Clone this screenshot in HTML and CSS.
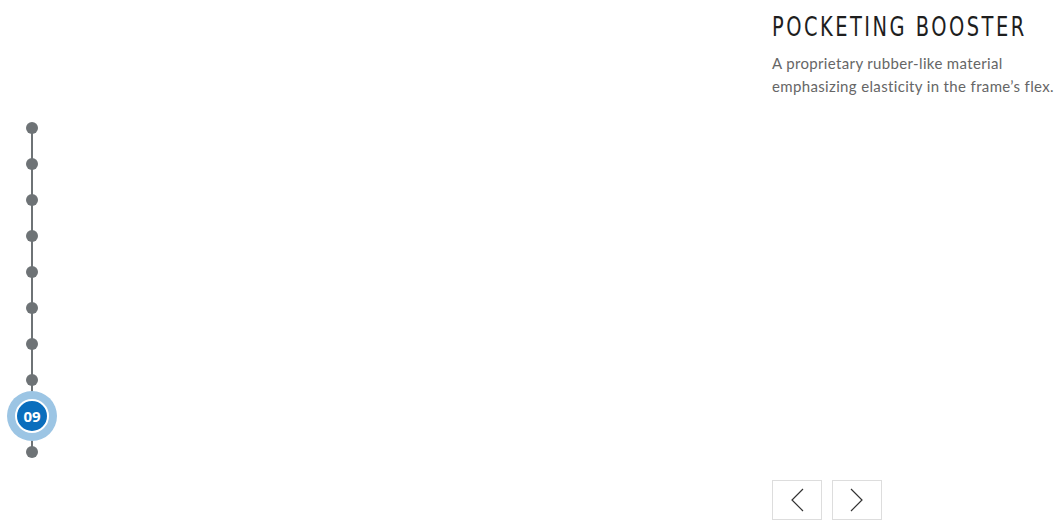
FILE: index.html
```html
<!DOCTYPE html>
<html lang="en">
<head>
<meta charset="UTF-8">
<meta name="viewport" content="width=device-width, initial-scale=1.0">
<title>Pocketing Booster</title>
<link rel="stylesheet" href="styles.css">
</head>
<body>
  <div class="page">
    <div class="timeline">
      <div class="step"><span class="dot"></span></div>
      <div class="step"><span class="dot"></span></div>
      <div class="step"><span class="dot"></span></div>
      <div class="step"><span class="dot"></span></div>
      <div class="step"><span class="dot"></span></div>
      <div class="step"><span class="dot"></span></div>
      <div class="step"><span class="dot"></span></div>
      <div class="step"><span class="dot"></span></div>
      <div class="step"><span class="active"><span class="num">09</span></span></div>
      <div class="step"><span class="dot"></span></div>
    </div>
    <div class="info">
      <div class="text">
        <h2>POCKETING BOOSTER</h2>
        <p>A proprietary rubber-like material emphasizing elasticity in the frame’s flex.</p>
      </div>
      <div class="arrows">
        <button class="arrow" aria-label="Previous">
          <svg width="14" height="24" viewBox="0 0 14 24"><path d="M13 1 L2 12 L13 23" fill="none" stroke="#333" stroke-width="1.2"/></svg>
        </button>
        <button class="arrow" aria-label="Next">
          <svg width="14" height="24" viewBox="0 0 14 24"><path d="M1 1 L12 12 L1 23" fill="none" stroke="#333" stroke-width="1.2"/></svg>
        </button>
      </div>
    </div>
  </div>
</body>
</html>
```

FILE: styles.css
```css
body {
  margin: 0;
  background: #fff;
  font-family: Lato, "Open Sans", sans-serif;
}
.page {
  display: flex;
  justify-content: space-between;
  height: 525px;
}
.timeline {
  display: flex;
  flex-direction: column;
  margin: 110px 0 0 14px;
  width: 36px;
  height: 360px;
  background: linear-gradient(#6e7376, #6e7376) center / 2px calc(100% - 36px) no-repeat;
}
.step {
  height: 36px;
  display: flex;
  align-items: center;
  justify-content: center;
}
.dot {
  width: 12px;
  height: 12px;
  border-radius: 50%;
  background: #6e7376;
}
.active {
  flex: none;
  width: 50px;
  height: 50px;
  border-radius: 50%;
  background: #9cc5e4;
  display: flex;
  align-items: center;
  justify-content: center;
}
.num {
  width: 30px;
  height: 30px;
  border-radius: 50%;
  border: 2px solid #fff;
  background: #0a6ebd;
  color: #fff;
  font-family: "Open Sans", sans-serif;
  font-weight: 700;
  font-size: 15px;
  display: flex;
  align-items: center;
  justify-content: center;
}
.info {
  width: 291px;
  display: flex;
  flex-direction: column;
  justify-content: space-between;
  padding-bottom: 5px;
}
h2 {
  margin: 9px 0 0;
  font-family: "DejaVu Sans Condensed", sans-serif;
  font-weight: normal;
  font-size: 26px;
  letter-spacing: 3px;
  line-height: 36px;
  white-space: nowrap;
  color: #1e1e1e;
  transform: scaleX(0.83);
  transform-origin: left center;
}
p {
  margin: 7px 0 0;
  font-size: 15px;
  letter-spacing: 0.35px;
  line-height: 23px;
  color: #666;
}
.arrows {
  display: flex;
  gap: 10px;
}
.arrow {
  width: 50px;
  height: 40px;
  padding: 0;
  border: 1px solid #ddd;
  background: #fff;
  display: flex;
  align-items: center;
  justify-content: center;
  cursor: pointer;
}
```
